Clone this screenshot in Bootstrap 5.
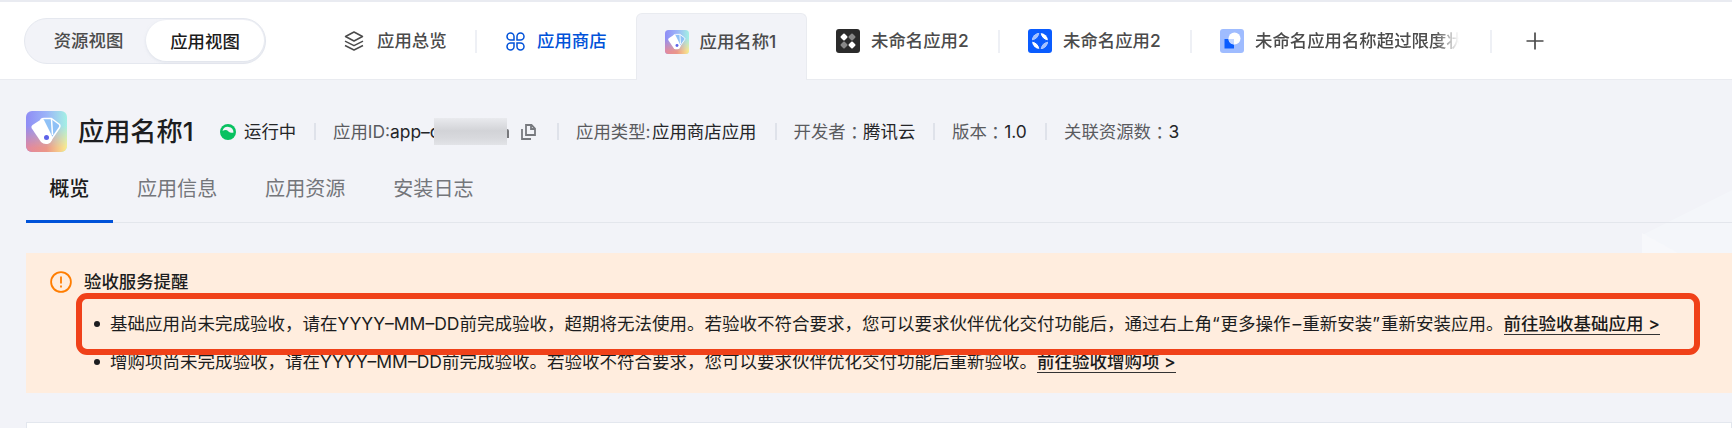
<!DOCTYPE html>
<html lang="zh-CN">
<head>
<meta charset="utf-8">
<title>应用名称1</title>
<link rel="stylesheet" href="https://cdn.jsdelivr.net/npm/bootstrap@5.3.0/dist/css/bootstrap.min.css">
<style>
body{font-family:Inter,"Noto Sans CJK SC",sans-serif;font-size:17.4px;line-height:26px;color:#1c1d20;background:#f2f3f8;height:428px;overflow:hidden;white-space:nowrap}
.topbar{height:80px;background:#fff;border-top:2px solid #e9ebf1;border-bottom:1.5px solid #e9ebf0}
.seg{width:242px;height:46px;margin:16px 49px 0 24px;background:#f2f3f8;border:1.5px solid #e5e8ef;color:#4b4b4b;font-weight:500}
.seg>span{width:118px;height:41px;line-height:43px;text-align:center}
.seg>span:first-child{width:121px;padding-left:6px}
.seg .on{background:#fff;color:#1b1b1b;box-shadow:0 1px 3px #c9d0dc88;margin-top:1px}
.apptab{height:78px;padding-left:29px;color:#4b4b4b;font-weight:500;position:relative}
.apptab svg{flex:none;margin-right:11px}
.divd::after{content:"";position:absolute;right:0;top:28px;width:2px;height:23px;background:#eef0f5}
.cur{margin-top:11px;height:67px;padding-bottom:10px;background:#f2f3f8;border:1.5px solid #e9ebf0;border-bottom:0;border-radius:6px 6px 0 0;padding-left:27.5px}
.fade-end{width:212px;-webkit-mask:linear-gradient(90deg,#000 180px,transparent 204px)}
.w162{width:162px}.w159{width:159px}.w171{width:171px}.w193{width:193px}.w192{width:192px}.w300{width:300px}
.apphead{height:41px;margin:31px 0 0 25.5px}
.apptitle{font-size:26.2px;line-height:39px;font-weight:500;width:142px;margin-left:11.5px}
.meta{height:41px;color:#5a5b5f;position:relative;padding-left:18px}
.meta::before{content:"";position:absolute;left:-1px;top:12px;width:2px;height:17px;background:#dfe2ea}
.meta.first{padding-left:0}.meta.first::before{display:none}
.meta b{font-weight:400;color:#242528}
.tc{font-family:"Noto Sans CJK TC",sans-serif}
.mask{width:73px;height:27px;margin-left:-6px;z-index:1;background:linear-gradient(#e9eaee,#d2d3d7 48%,#d8d9dd 75%,#e2e3e7)}
.tail{width:2px;height:9px;margin-top:4px;border-radius:0 2px 0 0;background:#77787c}
.subtabs{margin:10px 0 0 25.5px;height:61px;border-bottom:1.5px solid #e3e6ec;font-size:20.1px;color:#74767b}
.subtabs>span{width:128.2px;text-align:center;line-height:55px;height:61px}
.subtabs .on{width:87.5px;color:#1b1b1b;font-weight:500;border-bottom:3px solid #0052d9}
.notice{margin:29.5px 0 0 26px;height:140px;background:#ffedde;padding:16px 0 0 24px;position:relative}
.notice h6{font-size:17.4px;line-height:26px;font-weight:500;margin:0}
.notice ul{list-style:none;padding:0;margin:16px 0 0 35px}
.notice li{height:38px;line-height:26px;font-size:17.5px;padding-left:25px;position:relative}
.notice li::before{content:"";position:absolute;left:9px;top:10px;width:6px;height:6px;border-radius:50%;background:#1c1d20}
.notice a{color:#1b1b1b;font-weight:500;text-decoration:none;display:inline-block;height:24px;border-bottom:1.5px solid #333;vertical-align:top}
.dash{letter-spacing:1px;margin-left:2px}
.quo{letter-spacing:1px}
.frame{position:absolute;left:50px;top:40px;width:1624px;height:62px;border:6px solid #f04119;border-radius:11px}
.panel{margin:29.5px 0 0 26px;height:20px;background:#fff;border:1px solid #e3e7ee}
.glow{right:0;top:190px;z-index:-1}
</style>
<script src="https://cdn.jsdelivr.net/npm/bootstrap@5.3.0/dist/js/bootstrap.bundle.min.js"></script>
</head>
<body>
<svg class="glow position-absolute" width="102" height="63" viewBox="0 0 102 63"><path d="M102 0L12 45V63H102Z" fill="#f4f6fa"/><path d="M12 43L48 63H12Z" fill="#f7f8fb"/></svg>
<svg width="0" height="0" class="position-absolute">
<defs>
<linearGradient id="g1" x1="0" y1="0" x2="1" y2="0"><stop offset="0" stop-color="#8f8cf5"/><stop offset=".5" stop-color="#9bb4f8"/><stop offset="1" stop-color="#a4f0e4"/></linearGradient>
<linearGradient id="g2" x1="0" y1="0" x2="1" y2="0"><stop offset="0" stop-color="#e2889f"/><stop offset=".5" stop-color="#eb9688"/><stop offset="1" stop-color="#fbec8c"/></linearGradient>
<linearGradient id="g3" x1="0" y1="0" x2="0" y2="1"><stop offset=".35" stop-color="#fff" stop-opacity="0"/><stop offset=".9" stop-color="#fff"/></linearGradient>
<mask id="mk"><rect width="41" height="41" fill="url(#g3)"/></mask>
<symbol id="fan" viewBox="0 0 41 41">
<rect width="41" height="41" rx="6" fill="url(#g1)"/><rect width="41" height="41" rx="6" fill="url(#g2)" mask="url(#mk)"/>
<path d="M15 8.500Q16 7.500 18 7.500H25.500L33.500 13.500Q34.500 15 33.500 16.500L23.500 31Z" fill="#8fc1f6" stroke="#fff" stroke-width="1.500" stroke-linejoin="round"/>
<path d="M25.500 8L26.500 24" stroke="#fff" stroke-width="1.500"/>
<path d="M5.500 17Q5 15 6.500 14L15 8.500Q17 7.500 18 9L26 25Q27.500 30 23 32.500Q18 34 15 31Z" fill="#fff"/>
<circle cx="20.500" cy="26.500" r="2.500" fill="#5d63e8"/>
</symbol>
</defs></svg>

<header class="topbar d-flex">
  <div class="seg d-flex rounded-pill flex-shrink-0"><span>资源视图</span><span class="on rounded-pill">应用视图</span></div>
  <div class="apptab divd w162 d-flex align-items-center"><svg width="20" height="20" viewBox="0 0 20 20" fill="none" stroke="#4b4b4b" stroke-width="1.500" stroke-linejoin="round" style="margin-right:13px"><path d="M10 1L18.500 5.500L10 10L1.500 5.500ZM1 10.200L10 14.700L19 10.200M1 14.500L10 19L19 14.500"/></svg>应用总览</div>
  <div class="apptab w159 d-flex align-items-center" style="color:#0052d9"><svg width="19" height="19" viewBox="0 0 19 19" fill="none" stroke="#0052d9" stroke-width="1.500" style="margin-right:12px"><path d="M8 8H4.500A3.500 3.500 0 1 1 8 4.500ZM11 8V4.500A3.500 3.500 0 1 1 14.500 8ZM8 11V14.500A3.500 3.500 0 1 1 4.500 11ZM11 11H14.500A3.500 3.500 0 1 1 11 14.500Z"/></svg>应用商店</div>
  <div class="apptab cur w171 d-flex align-items-center"><svg width="24" height="24"><use href="#fan"/></svg>应用名称1</div>
  <div class="apptab divd w193 d-flex align-items-center"><svg width="24" height="24" viewBox="0 0 24 24"><rect width="24" height="24" rx="3" fill="#2b2b2b"/><g stroke-linejoin="round" stroke-width="2"><path d="M8 5.500L10.500 8L8 10.500L5.500 8ZM16 13.500L18.500 16L16 18.500L13.500 16Z" fill="#fff" stroke="#fff"/><path d="M16 5.500L18.500 8L16 10.500L13.500 8ZM8 13.500L10.500 16L8 18.500L5.500 16Z" fill="#888" stroke="#888"/></g></svg>未命名应用2</div>
  <div class="apptab divd w192 d-flex align-items-center" style="padding-left:28px"><svg width="24" height="24" viewBox="0 0 24 24"><rect width="24" height="24" rx="3" fill="#0a5cff"/><circle cx="12" cy="12" r="8" fill="#fff"/><path d="M4 12A8 8 0 0 1 12 4V12ZM20 12A8 8 0 0 1 12 20V12Z" fill="#a3c1ff"/><path d="M12 4Q13.500 10.500 20 12Q13.500 13.500 12 20Q10.500 13.500 4 12Q10.500 10.500 12 4Z" fill="#0a5cff" stroke="#0a5cff"/></svg>未命名应用2</div>
  <div class="apptab divd w300 d-flex align-items-center" style="padding-left:28px"><svg width="24" height="24" viewBox="0 0 24 24"><rect width="24" height="24" rx="3" fill="#9fbcff"/><path d="M4.500 10H14V19.500H4.500Z" fill="#0a5cff"/><circle cx="14.500" cy="9.500" r="6" fill="#fff"/><path d="M8.500 10H14V15.500A6 6 0 0 1 8.500 10Z" fill="#c4d7ff"/></svg><span class="fade-end">未命名应用名称超过限度状</span></div>
  <div class="apptab d-flex align-items-center" style="padding-left:34px"><svg width="18" height="18" viewBox="0 0 18 18"><path d="M9 .5V17.500M.5 9H17.500" stroke="#4b4b4b" stroke-width="1.700"/></svg></div>
</header>

<section class="apphead d-flex align-items-center">
  <svg width="41" height="41" class="flex-shrink-0"><use href="#fan"/></svg>
  <div class="apptitle">应用名称1</div>
  <div class="meta first d-flex align-items-center" style="width:95px"><svg width="16" height="16" viewBox="0 0 16 16" style="margin-right:8px"><circle cx="8" cy="8" r="8" fill="#07c160"/><path d="M2.500 7A5.600 5.600 0 0 1 13.500 8.500Q10.500 9.500 8.500 7.500Q6 5 2.500 7Z" fill="#f2f3f8"/></svg><b>运行中</b></div>
  <div class="meta d-flex align-items-center" style="width:243px">应用ID:<b>app–c</b><span class="mask"></span><span class="tail"></span><svg width="15" height="16" viewBox="0 0 15 16" fill="none" stroke="#77797e" stroke-width="1.800" style="margin-left:12px"><path d="M5 1H10.500L14 4.500V11H5ZM10 1V5H14M1 5V15H10"/></svg></div>
  <div class="meta d-flex align-items-center" style="width:217.500px">应用类型:<b style="margin-left:1.500px">应用商店应用</b></div>
  <div class="meta d-flex align-items-center" style="width:158.500px">开发者<span class="tc" lang="zh-TW">：</span><b>腾讯云</b></div>
  <div class="meta d-flex align-items-center" style="width:112px">版本<span class="tc" lang="zh-TW">：</span><b>1.0</b></div>
  <div class="meta d-flex align-items-center">关联资源数<span class="tc" lang="zh-TW">：</span><b>3</b></div>
</section>

<nav class="subtabs d-flex"><span class="on">概览</span><span>应用信息</span><span>应用资源</span><span>安装日志</span></nav>

<section class="notice">
  <div class="d-flex align-items-center"><svg width="22" height="22" viewBox="0 0 22 22" fill="none" stroke="#ff7d00" stroke-width="1.800" style="margin-right:12px"><circle cx="11" cy="11" r="9.900"/><path d="M11 5.500V12.500M11 14.500V16.500"/></svg><h6>验收服务提醒</h6></div>
  <ul>
    <li>基础应用尚未完成验收，请在<span class="ymd">YYYY–MM–DD</span>前完成验收，超期将无法使用。若验收不符合要求，您可以要求伙伴优化交付功能后，通过右上角<span class="quo">“</span>更多操作<span class="dash">–</span>重新安装<span class="quo">”</span>重新安装应用。<a href="#">前往验收基础应用 &gt;</a></li>
    <li>增购项尚未完成验收，请在<span class="ymd">YYYY–MM–DD</span>前完成验收。若验收不符合要求，您可以要求伙伴优化交付功能后重新验收。<a href="#">前往验收增购项 &gt;</a></li>
  </ul>
  <div class="frame"></div>
</section>
<div class="panel"></div>
</body>
</html>
